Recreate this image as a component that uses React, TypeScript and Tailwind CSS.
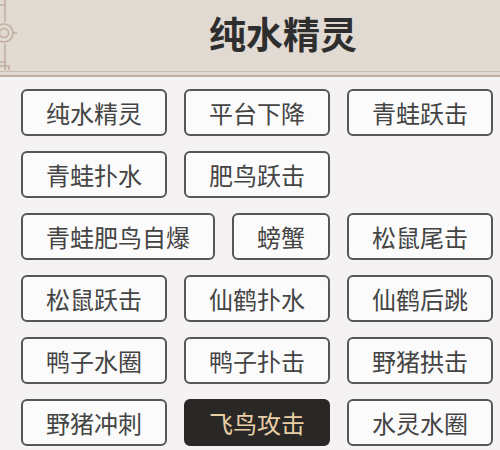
import React from "react";

const skills = [
  "纯水精灵",
  "平台下降",
  "青蛙跃击",
  "青蛙扑水",
  "肥鸟跃击",
  "青蛙肥鸟自爆",
  "螃蟹",
  "松鼠尾击",
  "松鼠跃击",
  "仙鹤扑水",
  "仙鹤后跳",
  "鸭子水圈",
  "鸭子扑击",
  "野猪拱击",
  "野猪冲刺",
  "飞鸟攻击",
  "水灵水圈",
];

function Ornament() {
  return (
    <svg width="24" height="72" viewBox="0 0 24 72" className="shrink-0" fill="none" stroke="#c2ad9e" strokeWidth="1.5">
      <path d="M5 0 V22" />
      <path d="M5 44 V62" />
      <path d="M0 5 H5" />
      <circle cx="4" cy="33" r="9" />
      <circle cx="4" cy="33" r="4.5" />
      <path d="M13 33 H17" />
      <path d="M0 62 H5 V70" />
      <path d="M0 66 H9 V70" />
    </svg>
  );
}

export default function App() {
  return (
    <div className="w-[500px] h-[450px] overflow-hidden bg-[#f4f2f2] font-['Noto_Sans_CJK_SC','Noto_Sans',sans-serif]">
      <header className="bg-[#e1dad2]">
        <div className="h-[72px] flex items-center border-b border-[#cbbcaf]">
          <Ornament />
          <h1 className="flex-1 text-center pl-[42px] pb-[4px] text-[37px] font-bold text-[#2e2e2e] leading-none">纯水精灵</h1>
        </div>
        <div className="h-[3px]" />
        <div className="h-[2px] bg-[#bcaea4]" />
      </header>
      <div className="flex flex-wrap gap-x-[17px] gap-y-[15px] pl-[21px] pr-[2px] pt-[12px]">
        {skills.map((s) => {
          const active = s === "飞鸟攻击";
          return (
            <button
              key={s}
              className={
                active
                  ? "h-[47px] px-[23px] rounded-[6px] border-2 border-[#2a2826] bg-[#2a2826] text-[#e9cfa6] text-[24px] leading-none"
                  : "h-[47px] px-[23px] rounded-[6px] border-2 border-[#565656] bg-[#fbfbfb] text-[#444] text-[24px] leading-none"
              }
            >
              {s}
            </button>
          );
        })}
      </div>
    </div>
  );
}
